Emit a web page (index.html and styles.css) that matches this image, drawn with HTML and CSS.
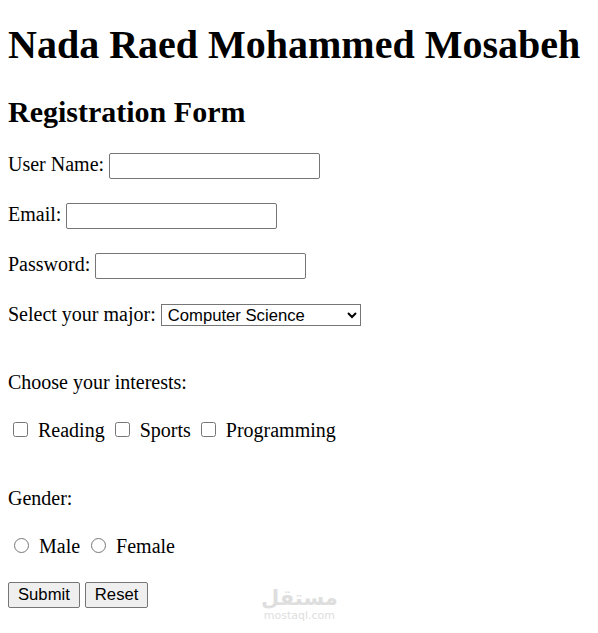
FILE: index.html
```html
<!DOCTYPE html>
<html lang="en">
<head>
    <meta charset="UTF-8">
    <meta name="viewport" content="width=device-width, initial-scale=1.0">
    <title>Registration Form</title>
    <link rel="stylesheet" href="styles.css">
</head>
<body>
    <h1>Nada Raed Mohammed Mosabeh</h1>
    <h2>Registration Form</h2>
    <form id="regForm">
        <p>User Name: <input type="text" name="username"></p>
        <p>Email: <input type="email" name="email"></p>
        <p>Password: <input type="password" name="password"></p>
        <p class="spaced">Select your major:
            <select name="major">
                <option>Computer Science</option>
                <option>Information Technology</option>
                <option>Software Engineering</option>
            </select>
        </p>
        <p>Choose your interests:</p>
        <p class="spaced">
            <input type="checkbox" name="interest" value="reading"> Reading
            <input type="checkbox" name="interest" value="sports"> Sports
            <input type="checkbox" name="interest" value="programming"> Programming
        </p>
        <p>Gender:</p>
        <p>
            <input type="radio" name="gender" value="male"> Male
            <input type="radio" name="gender" value="female"> Female
        </p>
        <p class="buttons">
            <button type="submit">Submit</button>
            <button type="reset">Reset</button>
        </p>
    </form>

    <!-- watermark from the screenshot -->
    <div class="watermark">
        <span class="wm-ar">مستقل</span>
        <span class="wm-en">mostaql.com</span>
    </div>
</body>
</html>
```

FILE: styles.css
```css
body {
    font-family: "Liberation Serif", "Times New Roman", serif;
    font-size: 20px;
    color: #000;
    background-color: #fff;
    margin: 0 8px;
    position: relative;
}
h1 {
    font-size: 40px;
    margin: 21px 0 27px;
}
h2 {
    font-size: 30px;
    margin: 0 0 22px;
}
p {
    margin: 24px 0;
}
p.spaced {
    margin-bottom: 45px;
}
p.buttons {
    margin-top: 23px;
}
input[type="text"], input[type="email"], input[type="password"] {
    width: 211px;
    height: 26px;
    box-sizing: border-box;
    border: 1px solid #767676;
    border-radius: 2px;
    padding: 1px 2px;
    font-size: 16.67px;
    vertical-align: baseline;
}
select {
    width: 200px;
    height: 22px;
    box-sizing: border-box;
    font-family: "Liberation Sans", Arial, sans-serif;
    font-size: 16.67px;
    border: 1px solid #767676;
    border-radius: 0;
    padding: 0 2px;
    background-color: #fff;
    color: #000;
}
input[type="checkbox"], input[type="radio"] {
    width: 15px;
    height: 15px;
    margin: 4px 5px 3px 5px;
}
input[type="radio"] {
    margin-left: 6px;
}
button {
    font-family: "Liberation Sans", Arial, sans-serif;
    font-size: 16.67px;
    color: #000;
    padding: 1px 9px;
    height: 26px;
    background-color: #efefef;
    border: 1px solid #767676;
    border-radius: 2px;
}
.watermark {
    position: absolute;
    left: 253px;
    top: 586px;
    display: flex;
    flex-direction: column;
    align-items: center;
    color: #dedede;
    font-family: "DejaVu Sans", sans-serif;
}
.wm-ar {
    font-size: 21px;
    font-weight: bold;
    line-height: 24px;
}
.wm-en {
    font-size: 11px;
    line-height: 12px;
}
```
